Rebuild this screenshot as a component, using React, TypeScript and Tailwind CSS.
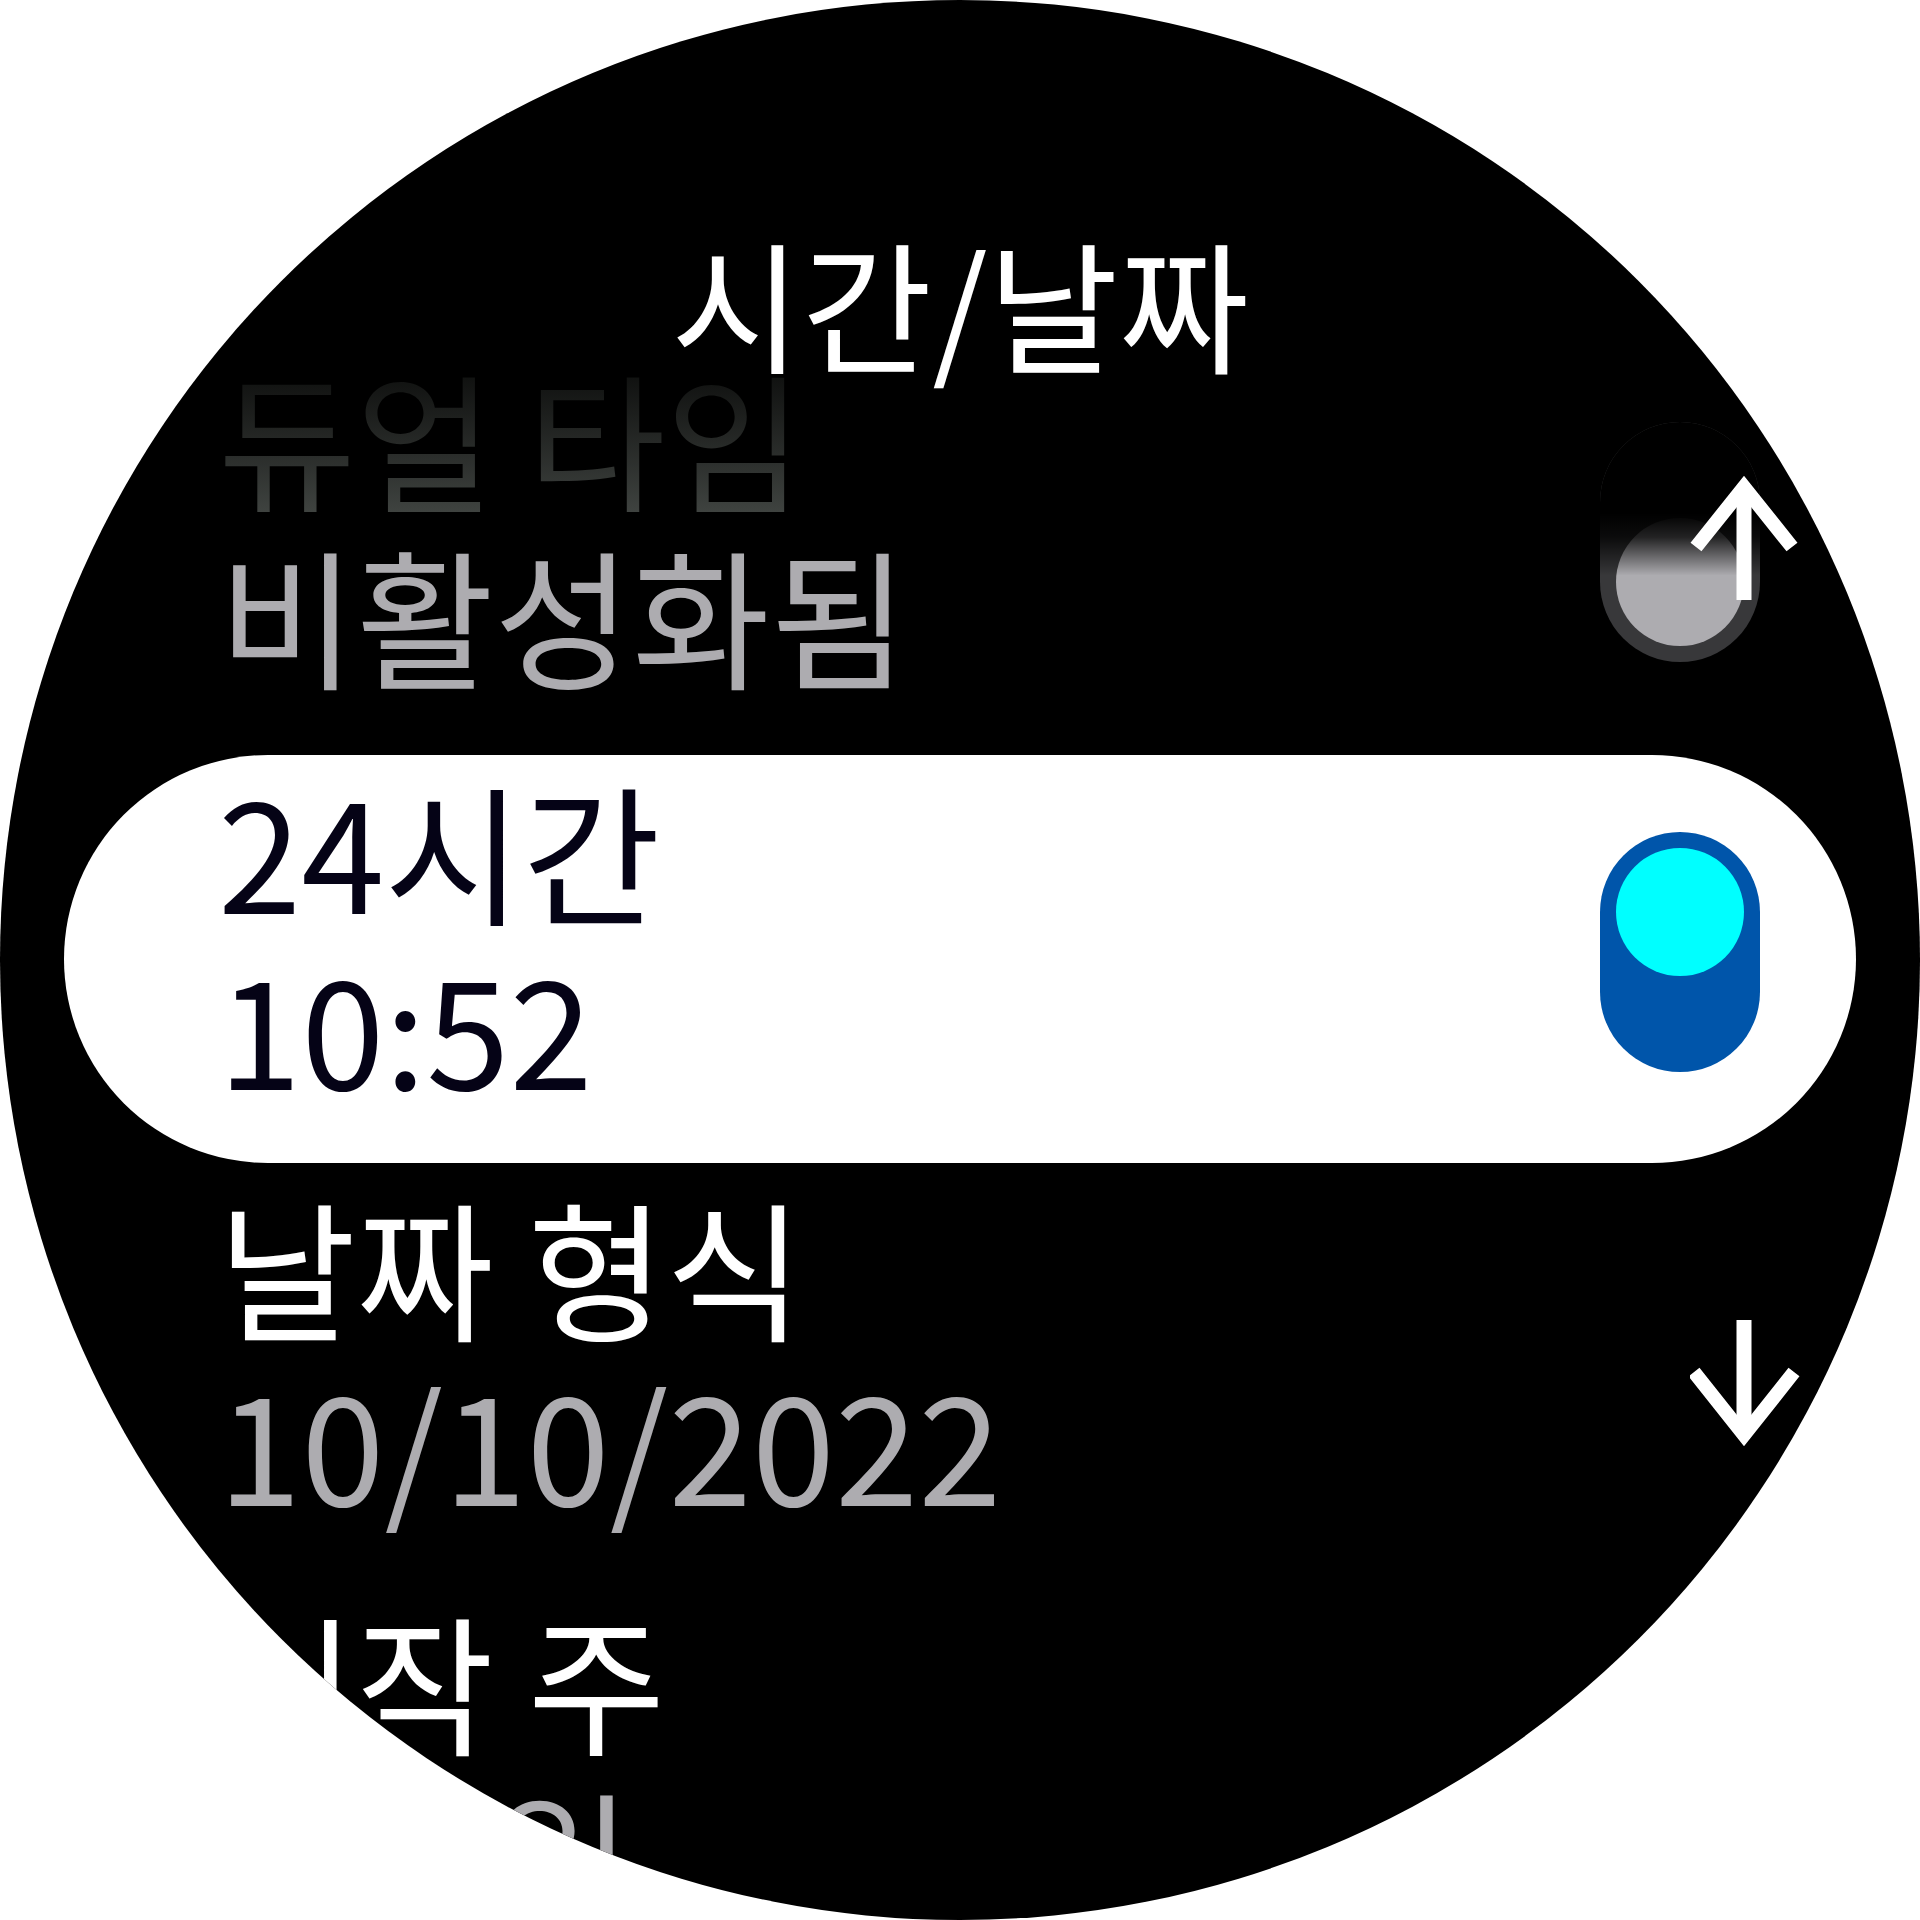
import React from 'react';

const FONT = { fontFamily: '"Noto Sans CJK KR", "Noto Sans", sans-serif' };

function Toggle({ on }: { on: boolean }) {
  if (on) {
    return (
      <div className="flex h-[240px] w-[160px] flex-col items-center rounded-full bg-[#0055aa] pt-[16px]">
        <div className="h-[128px] w-[128px] rounded-full bg-[#00ffff]" />
      </div>
    );
  }
  return (
    <div className="relative flex h-[240px] w-[160px] flex-col items-center justify-end rounded-full bg-[#38383a] pb-[16px]">
      <div className="h-[128px] w-[128px] rounded-full bg-[#adacb0]" />
      {/* fade toward the title */}
      <div className="absolute inset-0 rounded-full bg-gradient-to-b from-black from-38% via-black/80 via-48% to-transparent to-64%" />
    </div>
  );
}

interface Row {
  label: string;
  value: string;
  toggle?: boolean;
  selected?: boolean;
  faded?: boolean;
}

const rows: Row[] = [
  { label: '듀얼 타임', value: '비활성화됨', toggle: false, faded: true },
  { label: '24시간', value: '10:52', toggle: true, selected: true },
  { label: '날짜 형식', value: '10/10/2022' },
  { label: '시작 주', value: '일요일' },
];

function Texts({ row }: { row: Row }) {
  return (
    <div className="flex flex-col">
      <div
        className={
          'h-[150px] text-[150px] leading-none whitespace-nowrap [word-spacing:0px] ' +
          (row.faded ? 'bg-gradient-to-b from-[#0c0d0c] to-[#3f4340] bg-clip-text text-transparent' : '')
        }
      >
        {row.label}
      </div>
      <div
        className={
          'mt-[26px] h-[150px] text-[150px] leading-none whitespace-nowrap ' +
          (row.selected ? 'text-[#050316]' : 'text-[#adacb0]')
        }
      >
        {row.value}
      </div>
    </div>
  );
}

function Item({ row }: { row: Row }) {
  if (row.selected) {
    return (
      <div className="flex h-[414px] shrink-0 py-[3px]">
        <div className="mx-[64px] flex flex-1 items-start justify-between rounded-full bg-white pl-[154px] pr-[96px] pt-[19px] text-[#050316]">
          <Texts row={row} />
          <div className="mt-[58px]">
            <Toggle on />
          </div>
        </div>
      </div>
    );
  }
  return (
    <div className="flex h-[414px] shrink-0 items-start justify-between pl-[218px] pr-[160px] pt-[24px] text-white">
      <Texts row={row} />
      {row.toggle !== undefined && (
        <div className="mt-[60px]">
          <Toggle on={row.toggle} />
        </div>
      )}
    </div>
  );
}

export default function App() {
  return (
    <div className="h-[1920px] w-[1920px] bg-white" style={FONT}>
      <div className="relative flex h-full w-full flex-col overflow-hidden rounded-full bg-black pt-[230px]">
        <div className="h-[108px] shrink-0 text-center text-[142px] leading-none whitespace-nowrap text-white">
          시간/날짜
        </div>
        {rows.map((r) => (
          <Item key={r.label} row={r} />
        ))}

        {/* scroll indicators */}
        <svg className="absolute left-[1690px] top-[475px]" width="110" height="130" viewBox="0 0 110 130">
          <path d="M54 14 L54 125" stroke="white" strokeWidth="15" fill="none" />
          <path d="M6 72 L54 12 L102 72" stroke="white" strokeWidth="14" fill="none" strokeLinejoin="miter" />
        </svg>
        <svg className="absolute left-[1690px] top-[1315px]" width="110" height="140" viewBox="0 0 110 140">
          <path d="M54 5 L54 118" stroke="white" strokeWidth="15" fill="none" />
          <path d="M4 57 L54 120 L104 57" stroke="white" strokeWidth="14" fill="none" strokeLinejoin="miter" />
        </svg>
      </div>
    </div>
  );
}
